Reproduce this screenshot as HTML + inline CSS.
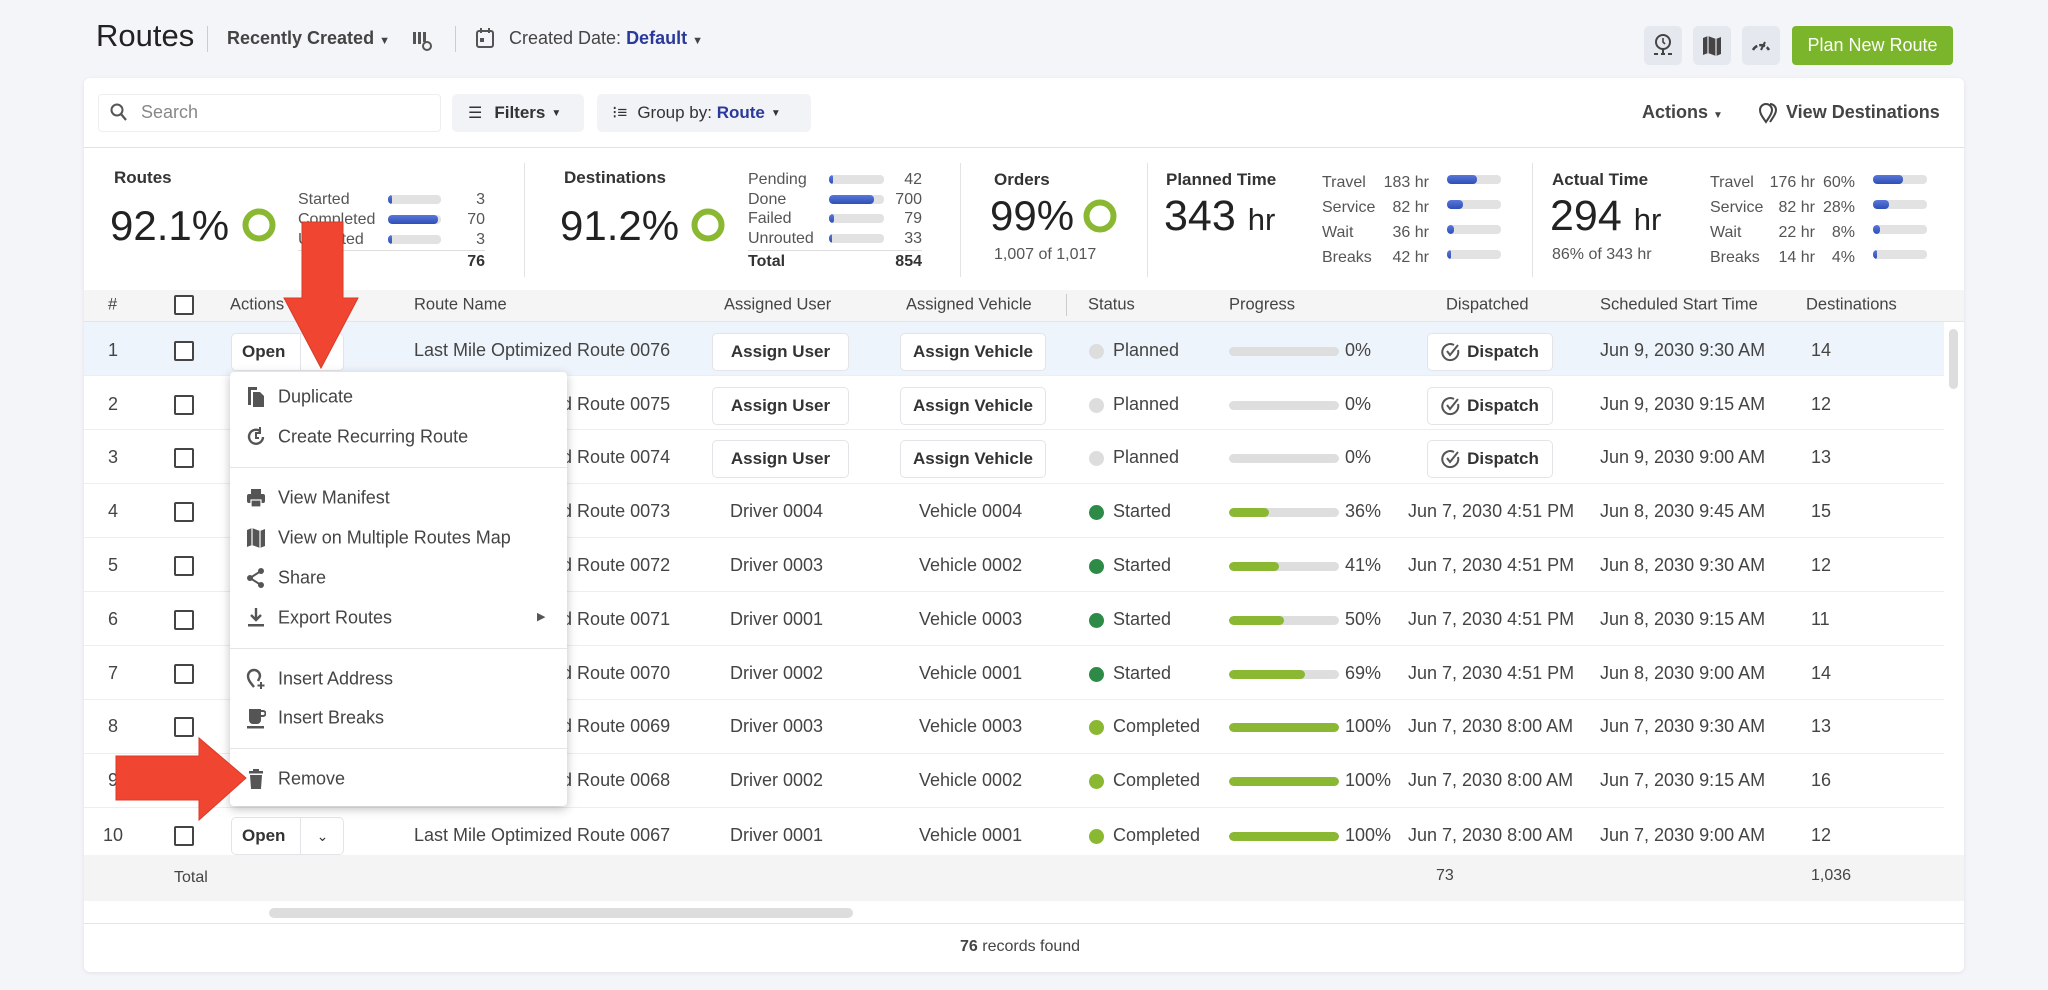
<!DOCTYPE html>
<html><head><meta charset="utf-8"><style>
*{box-sizing:border-box;margin:0;padding:0}
body{width:2048px;height:990px;background:#f4f5f8;font-family:"Liberation Sans",Arial,sans-serif;color:#333;position:relative;overflow:hidden}
.a{position:absolute;white-space:nowrap}
.card{position:absolute;left:84px;top:78px;width:1880px;height:894px;background:#fff;border-radius:6px;box-shadow:0 1px 4px rgba(0,0,0,.08)}
.btn{position:absolute;background:#fff;border:1px solid #e2e4e8;border-radius:5px;font-weight:bold;font-size:17px;color:#333;display:flex;align-items:center;justify-content:center}
.tb{position:absolute;background:#f2f3f7;border-radius:5px;display:flex;align-items:center;font-size:17px;color:#333}
.row{position:absolute;left:84px;width:1860px;height:54px;border-bottom:1px solid #eee}
.cb{width:20px;height:20px;border:2px solid #444;border-radius:2px;background:#fff}
.dot{width:15px;height:15px;border-radius:50%}
.pb{width:110px;height:9px;border-radius:5px;background:#dedede;overflow:hidden}
.pb i{display:block;height:100%;background:#8ab832;border-radius:5px}
.bar{position:absolute;height:9px;background:#e2e2e2;border-radius:4px;overflow:hidden}
.bar i{display:block;height:100%;background:linear-gradient(#5a78d8,#2f4fb8);border-radius:4px}
.lbl{font-size:16px;color:#555}
.mi{position:absolute;left:278px;font-size:18px;color:#444;transform:translateY(-50%)}
.ic{position:absolute;left:246px;width:20px;height:22px;transform:translateY(-50%)}
.hd{font-size:16.5px;color:#444;top:305px;transform:translateY(-50%)}
</style></head><body>

<!-- header -->
<div class="a" style="left:96px;top:18px;font-size:31px;color:#222">Routes</div>
<div class="a" style="left:207px;top:26px;width:1px;height:26px;background:#ccc"></div>
<div class="a" style="left:227px;top:28px;font-size:18px;font-weight:bold;color:#444">Recently Created <span style="font-size:11px">▼</span></div>
<svg class="a" style="left:412px;top:30px" width="22" height="22" viewBox="0 0 22 22"><rect x="1" y="2" width="3" height="12" fill="#555"/><rect x="6" y="2" width="3" height="12" fill="#555"/><rect x="11" y="2" width="3" height="10" fill="#555"/><circle cx="15" cy="16" r="4" fill="none" stroke="#555" stroke-width="2"/></svg>
<div class="a" style="left:455px;top:26px;width:1px;height:26px;background:#ccc"></div>
<svg class="a" style="left:475px;top:27px" width="20" height="22" viewBox="0 0 20 22"><rect x="2" y="4" width="16" height="16" rx="2" fill="none" stroke="#555" stroke-width="2"/><rect x="5" y="1" width="2" height="5" fill="#555"/><rect x="13" y="1" width="2" height="5" fill="#555"/><rect x="5" y="11" width="4" height="4" fill="#555"/></svg>
<div class="a" style="left:509px;top:28px;font-size:18px;color:#444">Created Date: <b style="color:#2b3a9a">Default</b> <span style="font-size:11px">▼</span></div>

<div class="a" style="left:1644px;top:26px;width:38px;height:39px;background:#e6e8f0;border-radius:5px"></div>
<svg class="a" style="left:1652px;top:33px" width="22" height="26" viewBox="0 0 22 26"><circle cx="11" cy="9" r="7" fill="none" stroke="#444" stroke-width="2"/><path d="M11 5v4l2 2" stroke="#444" stroke-width="1.6" fill="none"/><path d="M11 16v5M2 21h4M9 21h4M16 21h4" stroke="#444" stroke-width="2"/></svg>
<div class="a" style="left:1693px;top:26px;width:38px;height:39px;background:#e6e8f0;border-radius:5px"></div>
<svg class="a" style="left:1702px;top:35px" width="20" height="22" viewBox="0 0 20 22"><path d="M1 3l5-2 8 3 5-2v17l-5 2-8-3-5 2z" fill="#444"/><path d="M6 1v17M14 4v17" stroke="#e6e8f0" stroke-width="1.2"/></svg>
<div class="a" style="left:1742px;top:26px;width:38px;height:39px;background:#e6e8f0;border-radius:5px"></div>
<svg class="a" style="left:1750px;top:36px" width="22" height="16" viewBox="0 0 22 16"><path d="M3 14A9 9 0 0 1 19 14" fill="none" stroke="#444" stroke-width="2.5" stroke-dasharray="6 2"/><path d="M11 14l4-8" stroke="#444" stroke-width="2"/></svg>
<div class="a" style="left:1792px;top:26px;width:161px;height:39px;background:#7ab52c;border-radius:4px;color:#fff;font-size:18px;display:flex;align-items:center;justify-content:center">Plan New Route</div>

<div class="card"></div>
<!-- toolbar -->
<div class="a" style="left:98px;top:94px;width:343px;height:38px;border:1px solid #eee;border-radius:4px"></div>
<svg class="a" style="left:110px;top:103px" width="18" height="20" viewBox="0 0 18 20"><circle cx="7" cy="7" r="5.5" fill="none" stroke="#555" stroke-width="2"/><path d="M11 11l5 6" stroke="#555" stroke-width="2.2"/></svg>
<div class="a" style="left:141px;top:102px;font-size:18px;color:#888">Search</div>
<div class="tb" style="left:452px;top:94px;width:132px;height:38px"><span style="margin-left:16px;font-size:16px">☰</span><b style="margin-left:12px;font-weight:bold">Filters</b><span style="font-size:10px;margin-left:6px">▼</span></div>
<div class="tb" style="left:597px;top:94px;width:214px;height:38px"><span style="margin-left:15px;font-size:17px">⁝≡</span><span style="margin-left:10px">Group by: <b style="color:#2b3a9a">Route</b></span><span style="font-size:10px;margin-left:6px">▼</span></div>
<div class="a" style="left:1642px;top:102px;font-size:18px;font-weight:bold;color:#444">Actions <span style="font-size:10px">▼</span></div>
<svg class="a" style="left:1758px;top:102px" width="20" height="22" viewBox="0 0 20 22"><path d="M8 20C3 13 2 11 2 8a6 6 0 0 1 12 0c0 3-2 6-6 12z" fill="none" stroke="#444" stroke-width="2"/><path d="M12 2a6 6 0 0 1 6 6c0 3-2 6-6 12" fill="none" stroke="#444" stroke-width="2"/></svg>
<div class="a" style="left:1786px;top:102px;font-size:18px;font-weight:bold;color:#444">View Destinations</div>
<div class="a" style="left:84px;top:147px;width:1880px;height:1px;background:#e3e3e3"></div>

<!-- stats -->
<div class="a" style="left:114px;top:168px;font-size:17px;font-weight:bold;color:#333">Routes</div>
<div class="a" style="left:110px;top:202px;font-size:42px;color:#222">92.1%</div>
<svg class="a" style="left:241px;top:207px" width="36" height="36"><circle cx="18" cy="18" r="13.5" fill="none" stroke="#8ab832" stroke-width="6"/></svg>
<div class="a lbl" style="left:298px;top:190px;line-height:20px">Started<br>Completed<br>Unrouted</div>
<div class="bar" style="left:388px;top:195px;width:53px"><i style="width:4px"></i></div>
<div class="bar" style="left:388px;top:215px;width:53px"><i style="width:50px"></i></div>
<div class="bar" style="left:388px;top:235px;width:53px"><i style="width:4px"></i></div>
<div class="a lbl" style="left:455px;top:190px;line-height:20px;width:30px;text-align:right">3<br>70<br>3</div>
<div class="a" style="left:298px;top:250px;width:187px;height:1px;background:#ddd"></div>
<div class="a" style="left:455px;top:253px;width:30px;text-align:right;font-size:16px;font-weight:bold">76</div>
<div class="a" style="left:524px;top:163px;width:1px;height:114px;background:#e3e3e3"></div>

<div class="a" style="left:564px;top:168px;font-size:17px;font-weight:bold">Destinations</div>
<div class="a" style="left:560px;top:202px;font-size:42px;color:#222">91.2%</div>
<svg class="a" style="left:690px;top:207px" width="36" height="36"><circle cx="18" cy="18" r="13.5" fill="none" stroke="#8ab832" stroke-width="6"/></svg>
<div class="a lbl" style="left:748px;top:170px;line-height:19.5px">Pending<br>Done<br>Failed<br>Unrouted</div>
<div class="bar" style="left:829px;top:175px;width:55px"><i style="width:4px"></i></div>
<div class="bar" style="left:829px;top:195px;width:55px"><i style="width:45px"></i></div>
<div class="bar" style="left:829px;top:214px;width:55px"><i style="width:5px"></i></div>
<div class="bar" style="left:829px;top:234px;width:55px"><i style="width:3px"></i></div>
<div class="a lbl" style="left:880px;top:170px;line-height:19.5px;width:42px;text-align:right">42<br>700<br>79<br>33</div>
<div class="a" style="left:748px;top:250px;width:174px;height:1px;background:#ddd"></div>
<div class="a" style="left:748px;top:253px;font-size:16px;font-weight:bold">Total</div>
<div class="a" style="left:880px;top:253px;width:42px;text-align:right;font-size:16px;font-weight:bold">854</div>
<div class="a" style="left:960px;top:163px;width:1px;height:114px;background:#e3e3e3"></div>

<div class="a" style="left:994px;top:170px;font-size:17px;font-weight:bold">Orders</div>
<div class="a" style="left:990px;top:192px;font-size:42px;color:#222">99%</div>
<svg class="a" style="left:1082px;top:198px" width="36" height="36"><circle cx="18" cy="18" r="13.5" fill="none" stroke="#8ab832" stroke-width="6"/></svg>
<div class="a lbl" style="left:994px;top:246px">1,007 of 1,017</div>
<div class="a" style="left:1147px;top:163px;width:1px;height:114px;background:#e3e3e3"></div>

<div class="a" style="left:1166px;top:170px;font-size:17px;font-weight:bold">Planned Time</div>
<div class="a" style="left:1164px;top:192px;font-size:43px;color:#222">343 <span style="font-size:31px">hr</span></div>
<div class="a lbl" style="left:1322px;top:170px;line-height:25px">Travel<br>Service<br>Wait<br>Breaks</div>
<div class="a lbl" style="left:1370px;top:170px;line-height:25px;width:59px;text-align:right">183 hr<br>82 hr<br>36 hr<br>42 hr</div>
<div class="bar" style="left:1447px;top:175px;width:54px"><i style="width:30px"></i></div>
<div class="bar" style="left:1447px;top:200px;width:54px"><i style="width:16px"></i></div>
<div class="bar" style="left:1447px;top:225px;width:54px"><i style="width:7px"></i></div>
<div class="bar" style="left:1447px;top:250px;width:54px"><i style="width:4px"></i></div>
<div class="a" style="left:1532px;top:163px;width:1px;height:114px;background:#e3e3e3"></div>

<div class="a" style="left:1552px;top:170px;font-size:17px;font-weight:bold">Actual Time</div>
<div class="a" style="left:1550px;top:192px;font-size:43px;color:#222">294 <span style="font-size:31px">hr</span></div>
<div class="a lbl" style="left:1552px;top:246px">86% of 343 hr</div>
<div class="a lbl" style="left:1710px;top:170px;line-height:25px">Travel<br>Service<br>Wait<br>Breaks</div>
<div class="a lbl" style="left:1758px;top:170px;line-height:25px;width:57px;text-align:right">176 hr<br>82 hr<br>22 hr<br>14 hr</div>
<div class="a lbl" style="left:1818px;top:170px;line-height:25px;width:37px;text-align:right">60%<br>28%<br>8%<br>4%</div>
<div class="bar" style="left:1873px;top:175px;width:54px"><i style="width:30px"></i></div>
<div class="bar" style="left:1873px;top:200px;width:54px"><i style="width:16px"></i></div>
<div class="bar" style="left:1873px;top:225px;width:54px"><i style="width:7px"></i></div>
<div class="bar" style="left:1873px;top:250px;width:54px"><i style="width:4px"></i></div>

<!-- table header -->
<div class="a" style="left:84px;top:290px;width:1880px;height:32px;background:#f5f5f5;border-bottom:1px solid #e5e5e5"></div>
<div class="a hd" style="left:108px">#</div>
<div class="a cb" style="left:174px;top:295px"></div>
<div class="a hd" style="left:230px">Actions</div>
<div class="a hd" style="left:414px">Route Name</div>
<div class="a hd" style="left:724px">Assigned User</div>
<div class="a hd" style="left:906px">Assigned Vehicle</div>
<div class="a" style="left:1066px;top:294px;width:1px;height:22px;background:#ccc"></div>
<div class="a hd" style="left:1088px">Status</div>
<div class="a hd" style="left:1229px">Progress</div>
<div class="a hd" style="left:1446px">Dispatched</div>
<div class="a hd" style="left:1600px">Scheduled Start Time</div>
<div class="a hd" style="left:1806px">Destinations</div>

<!-- rows -->
<div class="row" style="top:322px;background:#eef4fb"></div>
<div class="row" style="top:376px"></div>
<div class="row" style="top:430px"></div>
<div class="row" style="top:484px"></div>
<div class="row" style="top:538px"></div>
<div class="row" style="top:592px"></div>
<div class="row" style="top:646px"></div>
<div class="row" style="top:700px"></div>
<div class="row" style="top:754px"></div>
<div class="row" style="top:808px;border:none"></div>

<div style="position:absolute;left:0;top:0;width:2048px;height:990px;font-size:18px;color:#444">
<div class="a" style="left:108px;top:340px">1</div><div class="a" style="left:108px;top:394px">2</div><div class="a" style="left:108px;top:447px">3</div><div class="a" style="left:108px;top:501px">4</div><div class="a" style="left:108px;top:555px">5</div><div class="a" style="left:108px;top:609px">6</div><div class="a" style="left:108px;top:663px">7</div><div class="a" style="left:108px;top:716px">8</div><div class="a" style="left:108px;top:770px">9</div><div class="a" style="left:103px;top:825px">10</div>
<div class="a cb" style="left:174px;top:341px"></div><div class="a cb" style="left:174px;top:395px"></div><div class="a cb" style="left:174px;top:448px"></div><div class="a cb" style="left:174px;top:502px"></div><div class="a cb" style="left:174px;top:556px"></div><div class="a cb" style="left:174px;top:610px"></div><div class="a cb" style="left:174px;top:664px"></div><div class="a cb" style="left:174px;top:717px"></div><div class="a cb" style="left:174px;top:771px"></div><div class="a cb" style="left:174px;top:826px"></div>

<div class="btn" style="left:231px;top:333px;width:113px;height:38px;justify-content:flex-start"><span style="margin-left:10px">Open</span><span style="position:absolute;left:68px;top:0;bottom:0;border-left:1px solid #e2e4e8;width:44px;text-align:center;line-height:36px;font-weight:normal;font-size:14px">⌄</span></div>
<div class="btn" style="left:231px;top:817px;width:113px;height:38px;justify-content:flex-start"><span style="margin-left:10px">Open</span><span style="position:absolute;left:68px;top:0;bottom:0;border-left:1px solid #e2e4e8;width:44px;text-align:center;line-height:36px;font-weight:normal;font-size:14px">⌄</span></div>

<div class="a" style="left:414px;top:340px">Last Mile Optimized Route 0076</div>
<div class="a" style="left:414px;top:394px">Last Mile Optimized Route 0075</div>
<div class="a" style="left:414px;top:447px">Last Mile Optimized Route 0074</div>
<div class="a" style="left:414px;top:501px">Last Mile Optimized Route 0073</div>
<div class="a" style="left:414px;top:555px">Last Mile Optimized Route 0072</div>
<div class="a" style="left:414px;top:609px">Last Mile Optimized Route 0071</div>
<div class="a" style="left:414px;top:663px">Last Mile Optimized Route 0070</div>
<div class="a" style="left:414px;top:716px">Last Mile Optimized Route 0069</div>
<div class="a" style="left:414px;top:770px">Last Mile Optimized Route 0068</div>
<div class="a" style="left:414px;top:825px">Last Mile Optimized Route 0067</div>

<div class="btn" style="left:712px;top:333px;width:137px;height:38px">Assign User</div>
<div class="btn" style="left:712px;top:387px;width:137px;height:38px">Assign User</div>
<div class="btn" style="left:712px;top:440px;width:137px;height:38px">Assign User</div>
<div class="btn" style="left:900px;top:333px;width:146px;height:38px">Assign Vehicle</div>
<div class="btn" style="left:900px;top:387px;width:146px;height:38px">Assign Vehicle</div>
<div class="btn" style="left:900px;top:440px;width:146px;height:38px">Assign Vehicle</div>
<div class="a" style="left:730px;top:501px">Driver 0004</div><div class="a" style="left:919px;top:501px">Vehicle 0004</div>
<div class="a" style="left:730px;top:555px">Driver 0003</div><div class="a" style="left:919px;top:555px">Vehicle 0002</div>
<div class="a" style="left:730px;top:609px">Driver 0001</div><div class="a" style="left:919px;top:609px">Vehicle 0003</div>
<div class="a" style="left:730px;top:663px">Driver 0002</div><div class="a" style="left:919px;top:663px">Vehicle 0001</div>
<div class="a" style="left:730px;top:716px">Driver 0003</div><div class="a" style="left:919px;top:716px">Vehicle 0003</div>
<div class="a" style="left:730px;top:770px">Driver 0002</div><div class="a" style="left:919px;top:770px">Vehicle 0002</div>
<div class="a" style="left:730px;top:825px">Driver 0001</div><div class="a" style="left:919px;top:825px">Vehicle 0001</div>

<div class="a dot" style="left:1089px;top:344px;background:#ddd"></div><div class="a" style="left:1113px;top:340px">Planned</div>
<div class="a dot" style="left:1089px;top:398px;background:#ddd"></div><div class="a" style="left:1113px;top:394px">Planned</div>
<div class="a dot" style="left:1089px;top:451px;background:#ddd"></div><div class="a" style="left:1113px;top:447px">Planned</div>
<div class="a dot" style="left:1089px;top:505px;background:#2e8b47"></div><div class="a" style="left:1113px;top:501px">Started</div>
<div class="a dot" style="left:1089px;top:559px;background:#2e8b47"></div><div class="a" style="left:1113px;top:555px">Started</div>
<div class="a dot" style="left:1089px;top:613px;background:#2e8b47"></div><div class="a" style="left:1113px;top:609px">Started</div>
<div class="a dot" style="left:1089px;top:667px;background:#2e8b47"></div><div class="a" style="left:1113px;top:663px">Started</div>
<div class="a dot" style="left:1089px;top:720px;background:#8ab832"></div><div class="a" style="left:1113px;top:716px">Completed</div>
<div class="a dot" style="left:1089px;top:774px;background:#8ab832"></div><div class="a" style="left:1113px;top:770px">Completed</div>
<div class="a dot" style="left:1089px;top:829px;background:#8ab832"></div><div class="a" style="left:1113px;top:825px">Completed</div>

<div class="a pb" style="left:1229px;top:347px"><i style="width:0"></i></div><div class="a" style="left:1345px;top:340px">0%</div>
<div class="a pb" style="left:1229px;top:401px"><i style="width:0"></i></div><div class="a" style="left:1345px;top:394px">0%</div>
<div class="a pb" style="left:1229px;top:454px"><i style="width:0"></i></div><div class="a" style="left:1345px;top:447px">0%</div>
<div class="a pb" style="left:1229px;top:508px"><i style="width:36%"></i></div><div class="a" style="left:1345px;top:501px">36%</div>
<div class="a pb" style="left:1229px;top:562px"><i style="width:45%"></i></div><div class="a" style="left:1345px;top:555px">41%</div>
<div class="a pb" style="left:1229px;top:616px"><i style="width:50%"></i></div><div class="a" style="left:1345px;top:609px">50%</div>
<div class="a pb" style="left:1229px;top:670px"><i style="width:69%"></i></div><div class="a" style="left:1345px;top:663px">69%</div>
<div class="a pb" style="left:1229px;top:723px"><i style="width:100%"></i></div><div class="a" style="left:1345px;top:716px">100%</div>
<div class="a pb" style="left:1229px;top:777px"><i style="width:100%"></i></div><div class="a" style="left:1345px;top:770px">100%</div>
<div class="a pb" style="left:1229px;top:832px"><i style="width:100%"></i></div><div class="a" style="left:1345px;top:825px">100%</div>

<div class="btn" style="left:1427px;top:333px;width:126px;height:38px"><svg width="20" height="20" viewBox="0 0 20 20" style="margin-right:6px"><path d="M17 8A8 8 0 1 1 13 3" fill="none" stroke="#555" stroke-width="2"/><path d="M6 9l3 4 8-10" fill="none" stroke="#555" stroke-width="2"/></svg>Dispatch</div>
<div class="btn" style="left:1427px;top:387px;width:126px;height:38px"><svg width="20" height="20" viewBox="0 0 20 20" style="margin-right:6px"><path d="M17 8A8 8 0 1 1 13 3" fill="none" stroke="#555" stroke-width="2"/><path d="M6 9l3 4 8-10" fill="none" stroke="#555" stroke-width="2"/></svg>Dispatch</div>
<div class="btn" style="left:1427px;top:440px;width:126px;height:38px"><svg width="20" height="20" viewBox="0 0 20 20" style="margin-right:6px"><path d="M17 8A8 8 0 1 1 13 3" fill="none" stroke="#555" stroke-width="2"/><path d="M6 9l3 4 8-10" fill="none" stroke="#555" stroke-width="2"/></svg>Dispatch</div>
<div class="a" style="left:1408px;top:501px">Jun 7, 2030 4:51 PM</div>
<div class="a" style="left:1408px;top:555px">Jun 7, 2030 4:51 PM</div>
<div class="a" style="left:1408px;top:609px">Jun 7, 2030 4:51 PM</div>
<div class="a" style="left:1408px;top:663px">Jun 7, 2030 4:51 PM</div>
<div class="a" style="left:1408px;top:716px">Jun 7, 2030 8:00 AM</div>
<div class="a" style="left:1408px;top:770px">Jun 7, 2030 8:00 AM</div>
<div class="a" style="left:1408px;top:825px">Jun 7, 2030 8:00 AM</div>

<div class="a" style="left:1600px;top:340px">Jun 9, 2030 9:30 AM</div><div class="a" style="left:1811px;top:340px">14</div>
<div class="a" style="left:1600px;top:394px">Jun 9, 2030 9:15 AM</div><div class="a" style="left:1811px;top:394px">12</div>
<div class="a" style="left:1600px;top:447px">Jun 9, 2030 9:00 AM</div><div class="a" style="left:1811px;top:447px">13</div>
<div class="a" style="left:1600px;top:501px">Jun 8, 2030 9:45 AM</div><div class="a" style="left:1811px;top:501px">15</div>
<div class="a" style="left:1600px;top:555px">Jun 8, 2030 9:30 AM</div><div class="a" style="left:1811px;top:555px">12</div>
<div class="a" style="left:1600px;top:609px">Jun 8, 2030 9:15 AM</div><div class="a" style="left:1811px;top:609px">11</div>
<div class="a" style="left:1600px;top:663px">Jun 8, 2030 9:00 AM</div><div class="a" style="left:1811px;top:663px">14</div>
<div class="a" style="left:1600px;top:716px">Jun 7, 2030 9:30 AM</div><div class="a" style="left:1811px;top:716px">13</div>
<div class="a" style="left:1600px;top:770px">Jun 7, 2030 9:15 AM</div><div class="a" style="left:1811px;top:770px">16</div>
<div class="a" style="left:1600px;top:825px">Jun 7, 2030 9:00 AM</div><div class="a" style="left:1811px;top:825px">12</div>
</div>

<div class="a" style="left:1949px;top:329px;width:9px;height:60px;background:#ddd;border-radius:5px"></div>

<!-- total row -->
<div class="a" style="left:84px;top:855px;width:1880px;height:46px;background:#f4f4f4"></div>
<div class="a" style="left:174px;top:869px;font-size:16px;color:#444">Total</div>
<div class="a" style="left:1436px;top:867px;font-size:16px;color:#444">73</div>
<div class="a" style="left:1811px;top:867px;font-size:16px;color:#444">1,036</div>
<div class="a" style="left:269px;top:908px;width:584px;height:10px;background:#ddd;border-radius:5px"></div>
<div class="a" style="left:84px;top:923px;width:1880px;height:1px;background:#e5e5e5"></div>
<div class="a" style="left:960px;top:938px;font-size:16px;color:#444"><b>76</b> records found</div>

<!-- dropdown menu -->
<div class="a" style="left:230px;top:372px;width:337px;height:434px;background:#fff;border-radius:4px;box-shadow:0 3px 10px rgba(0,0,0,.25)"></div>
<div class="a" style="left:230px;top:467px;width:337px;height:1px;background:#e5e5e5"></div>
<div class="a" style="left:230px;top:648px;width:337px;height:1px;background:#e5e5e5"></div>
<div class="a" style="left:230px;top:748px;width:337px;height:1px;background:#e5e5e5"></div>

<svg class="ic" style="top:397px" viewBox="0 0 20 22"><path d="M2 1h9v3H5v15H2z" fill="#555"/><path d="M7 6h7l4 4v11H7z" fill="#555"/></svg><div class="mi" style="top:397px">Duplicate</div>
<svg class="ic" style="top:437px" viewBox="0 0 20 22"><path d="M17 11A7 7 0 1 1 14 5" fill="none" stroke="#555" stroke-width="2.4"/><path d="M14 1v6h-5" fill="none" stroke="#555" stroke-width="2"/><path d="M10 7v5h3" fill="none" stroke="#555" stroke-width="2"/></svg><div class="mi" style="top:437px">Create Recurring Route</div>
<svg class="ic" style="top:498px" viewBox="0 0 20 22"><rect x="5" y="2" width="10" height="5" fill="#555"/><rect x="1" y="7" width="18" height="9" rx="2" fill="#555"/><rect x="5" y="13" width="10" height="7" fill="#555" stroke="#fff" stroke-width="1.2"/></svg><div class="mi" style="top:498px">View Manifest</div>
<svg class="ic" style="top:538px" viewBox="0 0 20 22"><path d="M1 3l5-2 8 3 5-2v17l-5 2-8-3-5 2z" fill="#555"/><path d="M6 1v17M14 4v17" stroke="#fff" stroke-width="1.2"/></svg><div class="mi" style="top:538px">View on Multiple Routes Map</div>
<svg class="ic" style="top:578px" viewBox="0 0 20 22"><circle cx="15" cy="4" r="3" fill="#555"/><circle cx="4" cy="11" r="3" fill="#555"/><circle cx="15" cy="18" r="3" fill="#555"/><path d="M15 4L4 11l11 7" fill="none" stroke="#555" stroke-width="2"/></svg><div class="mi" style="top:578px">Share</div>
<svg class="ic" style="top:618px" viewBox="0 0 20 22"><path d="M10 1v12M5 8l5 5 5-5" fill="none" stroke="#555" stroke-width="2.4"/><rect x="2" y="17" width="16" height="2.5" fill="#555"/></svg><div class="mi" style="top:618px">Export Routes</div>
<div class="a" style="left:537px;top:610px;font-size:11px;color:#555">▶</div>
<svg class="ic" style="top:679px" viewBox="0 0 20 22"><path d="M8 19C3 13 2 11 2 8a6 6 0 0 1 12 0c0 1-1 3-2 5" fill="none" stroke="#555" stroke-width="2.4"/><path d="M15 14v7M11.5 17.5h7" stroke="#555" stroke-width="2"/></svg><div class="mi" style="top:679px">Insert Address</div>
<svg class="ic" style="top:718px" viewBox="0 0 20 22"><path d="M3 2h12v11a4 4 0 0 1-4 4H7a4 4 0 0 1-4-4z" fill="#555"/><path d="M15 4h2a2 2 0 0 1 0 5h-2" fill="none" stroke="#555" stroke-width="2"/><rect x="1" y="19" width="17" height="2.5" fill="#555"/></svg><div class="mi" style="top:718px">Insert Breaks</div>
<svg class="ic" style="top:779px" viewBox="0 0 20 22"><rect x="3" y="3" width="14" height="2.5" fill="#555"/><rect x="7" y="1" width="6" height="3" fill="#555"/><path d="M4 7h12l-1 14H5z" fill="#555"/></svg><div class="mi" style="top:779px">Remove</div>

<svg class="a" style="left:0;top:0" width="2048" height="990" viewBox="0 0 2048 990">
<path d="M302 222h41v76h15l-37 70l-37-70h18z" fill="#f04531" stroke="#d83a28" stroke-width="1"/>
<path d="M116 756h83v-18l47 40l-47 42v-20h-83z" fill="#f04531" stroke="#d83a28" stroke-width="1"/>
</svg>
</body></html>
